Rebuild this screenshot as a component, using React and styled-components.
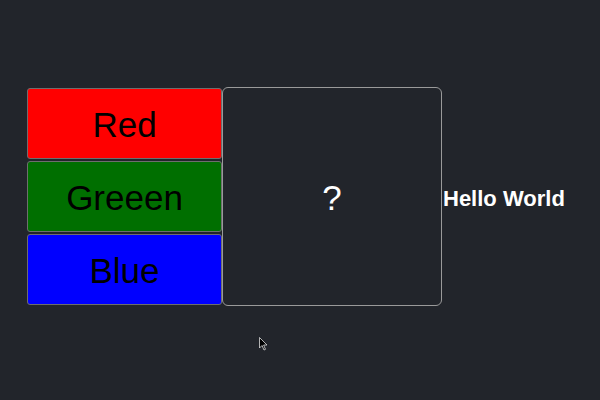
import React from 'react';
import styled, { createGlobalStyle } from 'styled-components';

const GlobalStyle = createGlobalStyle`
  html, body {
    margin: 0;
    padding: 0;
    background: #22252b;
  }
  body {
    font-family: "Liberation Sans", Arial, sans-serif;
  }
`;

const Page = styled.div`
  position: relative;
  height: 400px;
  width: 600px;
  display: flex;
  align-items: center;
  padding: 0 0 8px 27px;
  box-sizing: border-box;
`;

const ButtonColumn = styled.div`
  display: flex;
  flex-direction: column;
  gap: 2px;
  width: 195px;
`;

const ColorButton = styled.button`
  height: 71px;
  width: 100%;
  background: ${(p) => p.color};
  border: 1px solid #6e6e6e;
  border-radius: 3px;
  color: #000;
  font-family: "Liberation Sans", Arial, sans-serif;
  font-size: 35px;
  padding: 3px 0 0;
  cursor: pointer;
`;

const Preview = styled.div`
  width: 220px;
  height: 219px;
  box-sizing: border-box;
  border: 1px solid #9a9a9a;
  border-radius: 6px;
  display: flex;
  align-items: center;
  justify-content: center;
  padding-top: 3px;
  color: #fff;
  font-size: 35px;
`;

const Greeting = styled.h2`
  margin: 5px 0 0 1px;
  color: #fff;
  font-size: 22px;
  font-weight: bold;
`;

const Cursor = styled.svg`
  position: absolute;
  left: 259px;
  top: 337px;
`;

const colors = [
  { name: 'Red', value: '#ff0000' },
  { name: 'Greeen', value: '#006f00' },
  { name: 'Blue', value: '#0000ff' },
];

const App = () => {
  return (
    <>
      <GlobalStyle />
      <Page>
        <ButtonColumn>
          {colors.map((c) => (
            <ColorButton key={c.name} color={c.value}>
              {c.name}
            </ColorButton>
          ))}
        </ButtonColumn>
        <Preview>?</Preview>
        <Greeting>Hello World</Greeting>
        <Cursor width="10" height="15" viewBox="0 0 10 15">
          <path d="M0.5 0.5 L0.5 11 L3 8.5 L5 13 L6.5 12.3 L4.6 8 L8 8 Z" fill="#000" stroke="#ddd" strokeWidth="0.8" />
        </Cursor>
      </Page>
    </>
  );
};

export default App;
